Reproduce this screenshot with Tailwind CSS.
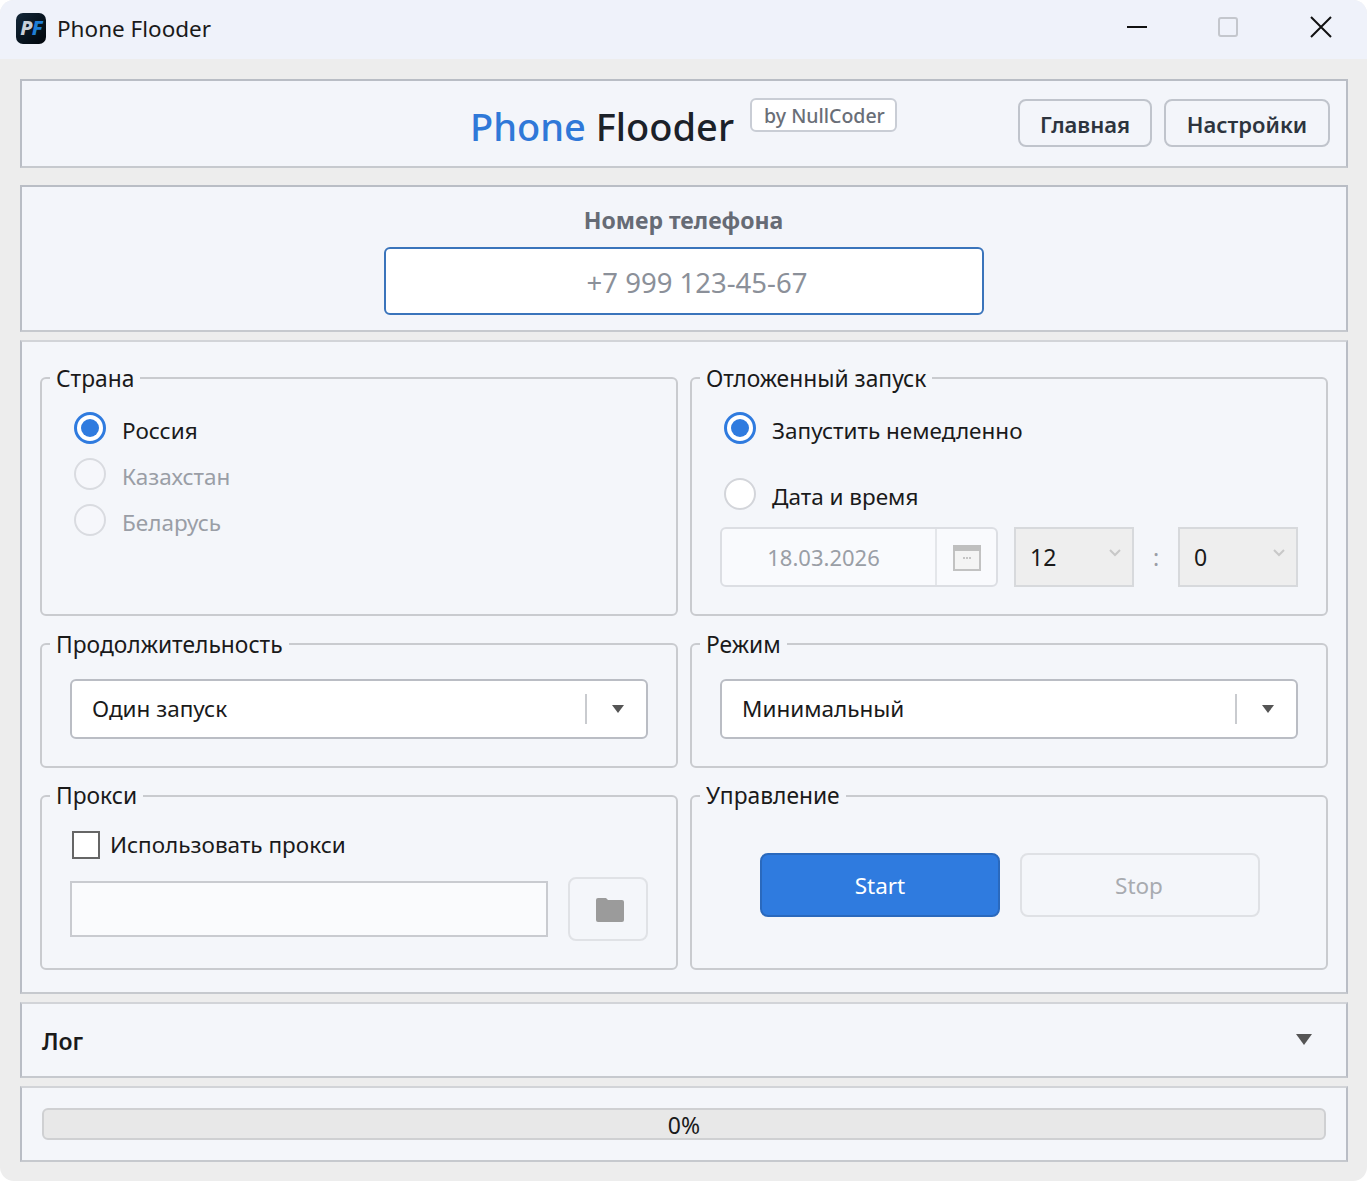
<!DOCTYPE html>
<html lang="ru">
<head>
  <meta charset="UTF-8" />
  <title>Phone Flooder</title>
  <script src="https://cdn.jsdelivr.net/npm/@tailwindcss/browser@4"></script>
</head>
<body class="bg-white font-['Noto_Sans',sans-serif] text-[#1a1a1a]">
  <div class="w-[1367px] h-[1181px] bg-[#ededed] rounded-[14px] overflow-hidden flex flex-col">
    <!-- Title bar -->
    <header class="h-[59px] bg-[#eff2fa] flex items-center shrink-0">
      <div class="ml-[16px] -mt-[3px] w-[30px] h-[31px] rounded-[7px] bg-gradient-to-br from-[#14283a] to-[#02060b] flex items-center justify-center text-[20px] font-extrabold italic leading-none tracking-tighter">
        <span class="text-[#c9d0d8]">P</span><span class="text-[#1f7ed6]">F</span>
      </div>
      <span class="ml-[11px] -mt-[2px] text-[22.5px]">Phone Flooder</span>
      <div class="ml-auto -mt-[6px] flex items-center">
        <svg class="w-[20px] h-[20px] mr-[71px]" viewBox="0 0 20 20"><path d="M0 10h20" stroke="#111" stroke-width="2" /></svg>
        <div class="w-[20px] h-[20px] border-2 border-[#c4c7cd] rounded-[3px] mr-[72px]"></div>
        <svg class="w-[22px] h-[22px] mr-[35px]" viewBox="0 0 22 22"><path d="M1 1l20 20M21 1L1 21" stroke="#111" stroke-width="2" /></svg>
      </div>
    </header>

    <main class="pl-5 pr-[19px] pt-5 flex flex-col">
      <!-- Header panel -->
      <section class="h-[89px] bg-[#f3f5fa] border-2 border-[#b9bdc5] border-b-[#c6c9ce] flex items-start relative">
        <h1 class="ml-[448px] mt-[20px] text-[38px] leading-[50px] font-medium whitespace-nowrap"><span class="text-[#2f78d8]">Phone</span> <span class="text-[#1b2129]">Flooder</span></h1>
        <span class="ml-[16px] mt-[17px] pt-[1px] pl-[2px] h-[34px] w-[147px] bg-white border-2 border-[#c9cdd5] rounded-[6px] flex items-center justify-center text-[19.5px] font-medium text-[#696e77]">by NullCoder</span>
        <div class="ml-auto mr-[16px] mt-[18px] flex gap-3">
          <button class="w-[134px] h-[48px] pt-[2px] border-2 border-[#c0c4cc] rounded-[8px] text-[22px] font-semibold text-[#2d343e]">Главная</button>
          <button class="w-[166px] h-[48px] pt-[2px] border-2 border-[#c0c4cc] rounded-[8px] text-[22px] font-semibold text-[#2d343e]">Настройки</button>
        </div>
      </section>

      <!-- Phone panel -->
      <section class="mt-[17px] h-[147px] bg-[#f3f5fa] border-2 border-[#b9bdc5] border-b-[#c6c9ce] flex flex-col items-center">
        <label class="mt-[18px] mr-[1px] h-[30px] leading-[30px] text-[23px] font-bold text-[#666b75]">Номер телефона</label>
        <div class="mt-[12px] w-[600px] h-[68px] pl-[26px] pt-[4px] bg-white border-2 border-[#3a74bb] rounded-[6px] flex items-center justify-center text-[27.5px] text-[#8b9099]">
          +7 999 123-45-67
        </div>
      </section>

      <!-- Main panel -->
      <section class="mt-2 h-[654px] bg-[#f4f6fa] border-2 border-[#d2d4d8] border-l-[#b9bdc5] border-r-[#b9bdc5] border-b-[#c6c9ce] px-[18px] pt-[35px] grid grid-cols-2 gap-x-3 gap-y-[27px] grid-rows-[239px_125px_175px]">
        <!-- Страна -->
        <div class="relative border-2 border-[#c9cbcf] rounded-[6px] pl-[32px] pt-[33px] flex flex-col gap-[14px]">
          <span class="absolute left-[8px] -top-[15px] px-[6px] bg-[#f4f6fa] h-[27px] text-[22.8px] leading-[30px]">Страна</span>
          <div class="flex items-center gap-[16px] h-[32px]">
            <span class="w-[32px] h-[32px] rounded-full border-[3px] border-[#2f7bdf] bg-white flex items-center justify-center"><span class="w-[18px] h-[18px] rounded-full bg-[#2f7bdf]"></span></span>
            <span class="text-[22.5px] mt-[6px]">Россия</span>
          </div>
          <div class="flex items-center gap-[16px] h-[32px]">
            <span class="w-[32px] h-[32px] rounded-full border-2 border-[#d9dbe0] bg-[#f6f7fb]"></span>
            <span class="text-[22.5px] mt-[6px] text-[#9a9ea6]">Казахстан</span>
          </div>
          <div class="flex items-center gap-[16px] h-[32px]">
            <span class="w-[32px] h-[32px] rounded-full border-2 border-[#d9dbe0] bg-[#f6f7fb]"></span>
            <span class="text-[22.5px] mt-[6px] text-[#9a9ea6]">Беларусь</span>
          </div>
        </div>

        <!-- Отложенный запуск -->
        <div class="relative border-2 border-[#c9cbcf] rounded-[6px] pl-[28px] pt-[33px] flex flex-col">
          <span class="absolute left-[8px] -top-[15px] px-[6px] bg-[#f4f6fa] h-[27px] text-[22.8px] leading-[30px]">Отложенный запуск</span>
          <div class="ml-[4px] flex items-center gap-[16px] h-[32px]">
            <span class="w-[32px] h-[32px] rounded-full border-[3px] border-[#2f7bdf] bg-white flex items-center justify-center"><span class="w-[18px] h-[18px] rounded-full bg-[#2f7bdf]"></span></span>
            <span class="text-[22.5px] mt-[6px]">Запустить немедленно</span>
          </div>
          <div class="ml-[4px] mt-[34px] flex items-center gap-[16px] h-[32px]">
            <span class="w-[32px] h-[32px] rounded-full border-2 border-[#d3d5da] bg-white"></span>
            <span class="text-[22.5px] mt-[6px]">Дата и время</span>
          </div>
          <div class="mt-[17px] flex items-center">
            <div class="w-[278px] h-[60px] border-2 border-[#dcdee3] rounded-[6px] bg-[#f9fafd] flex items-center">
              <span class="w-[215px] pr-[10px] border-r-2 border-[#e4e6ea] h-full flex items-center justify-center text-[22px] text-[#9a9ea6]">18.03.2026</span>
              <svg class="ml-[16px] w-[28px] h-[28px]" viewBox="0 0 28 28">
                <rect x="1" y="3" width="26" height="24" fill="#f4f4f4" stroke="#c2c2c2" stroke-width="2" />
                <rect x="0" y="2" width="28" height="6" fill="#bfbfbf" />
                <path d="M10 15h2M13 15h2M16 15h2" stroke="#b5b5b5" stroke-width="1.5" />
              </svg>
            </div>
            <div class="ml-[16px] w-[120px] h-[60px] bg-[#eeeeee] border-2 border-[#d7d9dc] flex items-center relative">
              <span class="ml-[14px] text-[23px]">12</span>
              <svg class="absolute right-[11px] top-[20px] w-[12px] h-[8px]" viewBox="0 0 12 8"><path d="M1 1l5 5 5-5" fill="none" stroke="#c8c8c8" stroke-width="2" /></svg>
            </div>
            <span class="w-[44px] text-center text-[23px] text-[#9a9ea6]">:</span>
            <div class="w-[120px] h-[60px] bg-[#eeeeee] border-2 border-[#d7d9dc] flex items-center relative">
              <span class="ml-[14px] text-[23px]">0</span>
              <svg class="absolute right-[11px] top-[20px] w-[12px] h-[8px]" viewBox="0 0 12 8"><path d="M1 1l5 5 5-5" fill="none" stroke="#c8c8c8" stroke-width="2" /></svg>
            </div>
          </div>
        </div>

        <!-- Продолжительность -->
        <div class="relative border-2 border-[#c9cbcf] rounded-[6px] px-[28px] pt-[34px]">
          <span class="absolute left-[8px] -top-[15px] px-[6px] bg-[#f4f6fa] h-[27px] text-[22.8px] leading-[30px]">Продолжительность</span>
          <div class="h-[60px] bg-white border-2 border-[#babdc4] rounded-[6px] flex items-center pl-[20px] text-[22.5px]">
            <span>Один запуск</span>
            <span class="ml-auto w-[2px] h-[30px] bg-[#c9cbcf]"></span>
            <svg class="ml-[25px] mr-[22px] w-[12px] h-[8px]" viewBox="0 0 12 8"><path d="M0 0h12L6 8z" fill="#555" /></svg>
          </div>
        </div>

        <!-- Режим -->
        <div class="relative border-2 border-[#c9cbcf] rounded-[6px] px-[28px] pt-[34px]">
          <span class="absolute left-[8px] -top-[15px] px-[6px] bg-[#f4f6fa] h-[27px] text-[22.8px] leading-[30px]">Режим</span>
          <div class="h-[60px] bg-white border-2 border-[#babdc4] rounded-[6px] flex items-center pl-[20px] text-[22.5px]">
            <span>Минимальный</span>
            <span class="ml-auto w-[2px] h-[30px] bg-[#c9cbcf]"></span>
            <svg class="ml-[25px] mr-[22px] w-[12px] h-[8px]" viewBox="0 0 12 8"><path d="M0 0h12L6 8z" fill="#555" /></svg>
          </div>
        </div>

        <!-- Прокси -->
        <div class="relative border-2 border-[#c9cbcf] rounded-[6px] px-[28px] pt-[34px]">
          <span class="absolute left-[8px] -top-[16px] px-[6px] bg-[#f4f6fa] h-[27px] text-[22.8px] leading-[30px]">Прокси</span>
          <div class="ml-[2px] flex items-center gap-[10px] h-[28px]">
            <span class="w-[28px] h-[28px] bg-white border-2 border-[#666]"></span>
            <span class="text-[22.5px]">Использовать прокси</span>
          </div>
          <div class="mt-[18px] flex items-center justify-between">
            <div class="w-[478px] h-[56px] bg-[#fafbfd] border-2 border-[#c9cbd0]"></div>
            <div class="w-[80px] h-[64px] pt-[2px] border-2 border-[#e0e2e6] rounded-[8px] flex items-center justify-center">
              <svg class="ml-[4px] w-[28px] h-[24px]" viewBox="0 0 28 24"><path d="M0 2a2 2 0 0 1 2-2h8l2 2h14a2 2 0 0 1 2 2v18a2 2 0 0 1-2 2H2a2 2 0 0 1-2-2z" fill="#9b9b9b" /></svg>
            </div>
          </div>
        </div>

        <!-- Управление -->
        <div class="relative border-2 border-[#c9cbcf] rounded-[6px] pl-[68px] pt-[56px] flex items-start gap-[20px]">
          <span class="absolute left-[8px] -top-[16px] px-[6px] bg-[#f4f6fa] h-[27px] text-[22.8px] leading-[30px]">Управление</span>
          <button class="w-[240px] h-[64px] pt-[2px] bg-[#2f7bdf] border-2 border-[#2a69bd] rounded-[8px] text-[22.5px] text-white">Start</button>
          <button class="w-[240px] h-[64px] pt-[2px] pr-[2px] border-2 border-[#dfe1e5] rounded-[8px] text-[22.5px] text-[#a8abb0]">Stop</button>
        </div>
      </section>

      <!-- Log panel -->
      <section class="mt-2 h-[76px] bg-[#f4f6fa] border-2 border-[#d2d4d8] border-l-[#b9bdc5] border-r-[#b9bdc5] border-b-[#c6c9ce] flex items-center pl-[20px] pr-[34px]">
        <span class="mt-[2px] text-[23px] font-semibold">Лог</span>
        <svg class="ml-auto -mt-[1px] w-[16px] h-[11px]" viewBox="0 0 16 11"><path d="M0 0h16L8 11z" fill="#555" /></svg>
      </section>

      <!-- Progress panel -->
      <section class="mt-2 h-[76px] bg-[#f4f6fa] border-2 border-[#d2d4d8] border-l-[#b9bdc5] border-r-[#b9bdc5] border-b-[#c6c9ce] flex items-center px-[20px]">
        <div class="w-full h-[32px] pt-[2px] bg-[#e8e8e8] border-2 border-[#cfd0d2] rounded-[6px] flex items-center justify-center text-[23px] leading-none">0%</div>
      </section>
    </main>
  </div>
</body>
</html>
